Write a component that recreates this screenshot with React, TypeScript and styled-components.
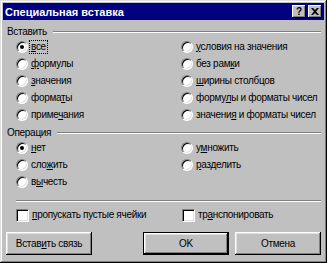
import React from "react";
import styled, { createGlobalStyle } from "styled-components";

const GlobalStyle = createGlobalStyle`
  html, body {
    margin: 0;
    padding: 0;
    background: #c0c0c0;
  }
  body {
    font-family: "Liberation Sans", Arial, sans-serif;
    font-size: 10px;
    letter-spacing: -0.3px;
    color: #000;
  }
  * {
    box-sizing: border-box;
  }
`;

// Window frame
const Window = styled.div`
  width: 327px;
  height: 263px;
  background: #c0c0c0;
  padding: 3px;
  display: flex;
  flex-direction: column;
  box-shadow: inset -1px -1px #000, inset 1px 1px #dfdfdf,
    inset -2px -2px #808080, inset 2px 2px #fff;
`;

// Title bar
const TitleBar = styled.div`
  height: 17px;
  background: #000080;
  color: #fff;
  display: flex;
  align-items: center;
  padding: 0 2px 0 2px;
`;

const TitleText = styled.div`
  flex: 1;
  font-weight: bold;
  font-size: 11px;
  letter-spacing: 0;
`;

const CaptionButton = styled.div<{ $gap?: number }>`
  width: 14px;
  height: 13px;
  margin-left: ${(p) => p.$gap ?? 0}px;
  background: #c0c0c0;
  color: #000;
  display: flex;
  align-items: center;
  justify-content: center;
  font-weight: bold;
  font-size: 10px;
  letter-spacing: 0;
  box-shadow: inset -1px -1px #000, inset 1px 1px #fff,
    inset -2px -2px #808080;
`;

// Content
const Body = styled.div`
  display: flex;
  flex-direction: column;
  padding: 0 3px 0 4px;
`;

const GroupHeader = styled.div<{ $top: number }>`
  height: 12px;
  margin-top: ${(p) => p.$top}px;
  display: flex;
  align-items: center;
  gap: 6px;
  line-height: 12px;
`;

const Etched = styled.div`
  flex: 1;
  height: 2px;
  border-top: 1px solid #808080;
  border-bottom: 1px solid #fff;
`;

const OptionGrid = styled.div<{ $rows: number }>`
  display: grid;
  grid-template-columns: 165px 1fr;
  grid-template-rows: repeat(${(p) => p.$rows}, 17px);
  grid-auto-flow: column;
  padding-left: 9px;
`;

const Option = styled.label`
  display: flex;
  align-items: center;
  gap: 1px;
  white-space: nowrap;
`;

const Radio = styled.span<{ $checked?: boolean }>`
  position: relative;
  width: 12px;
  height: 12px;
  flex: none;
  border-radius: 50%;
  background: #fff;
  border: 1px solid;
  border-color: #808080 #fff #fff #808080;
  box-shadow: inset 1px 1px #000, inset -1px -1px #dfdfdf;
  &::after {
    content: "";
    display: ${(p) => (p.$checked ? "block" : "none")};
    position: absolute;
    left: 3px;
    top: 3px;
    width: 4px;
    height: 4px;
    border-radius: 50%;
    background: #000;
  }
`;

const Check = styled.span`
  width: 13px;
  height: 13px;
  flex: none;
  background: #fff;
  border: 1px solid;
  border-color: #808080 #fff #fff #808080;
  box-shadow: inset 1px 1px #000, inset -1px -1px #dfdfdf;
`;

const Caption = styled.span<{ $focus?: boolean }>`
  padding: 0 1px;
  line-height: 12px;
  border: 1px dotted ${(p) => (p.$focus ? "#000" : "transparent")};
`;

const Key = styled.span`
  text-decoration: underline;
`;

const Separator = styled(Etched)`
  flex: none;
  margin: 10px 0 0 9px;
`;

const CheckRow = styled.div`
  display: grid;
  grid-template-columns: 166px 1fr;
  height: 13px;
  margin-top: 6px;
  padding-left: 9px;
`;

const Footer = styled.div`
  display: flex;
  gap: 6px;
  margin-top: 11px;
  padding: 0 3px 0 3px;
`;

const Button = styled.div<{ $default?: boolean; $push?: boolean }>`
  width: 86px;
  height: 23px;
  margin-left: ${(p) => (p.$push ? "auto" : "0")};
  display: flex;
  align-items: center;
  justify-content: center;
  background: #c0c0c0;
  border: ${(p) => (p.$default ? "1px solid #000" : "none")};
  box-shadow: inset -1px -1px #000, inset 1px 1px #fff,
    inset -2px -2px #808080, inset 2px 2px #dfdfdf;
`;

type Opt = { pre: string; hot: string; post: string; checked?: boolean; focus?: boolean };

const pasteOptions: Opt[] = [
  { pre: "", hot: "в", post: "се", checked: true, focus: true },
  { pre: "", hot: "ф", post: "ормулы" },
  { pre: "", hot: "з", post: "начения" },
  { pre: "форма", hot: "т", post: "ы" },
  { pre: "приме", hot: "ч", post: "ания" },
  { pre: "", hot: "у", post: "словия на значения" },
  { pre: "без рам", hot: "к", post: "и" },
  { pre: "", hot: "ш", post: "ирины столбцов" },
  { pre: "форму", hot: "л", post: "ы и форматы чисел" },
  { pre: "значени", hot: "я", post: " и форматы чисел" },
];

const operationOptions: Opt[] = [
  { pre: "", hot: "н", post: "ет", checked: true },
  { pre: "сло", hot: "ж", post: "ить" },
  { pre: "в", hot: "ы", post: "честь" },
  { pre: "у", hot: "м", post: "ножить" },
  { pre: "", hot: "р", post: "азделить" },
];

const RadioOption = ({ pre, hot, post, checked, focus }: Opt) => (
  <Option>
    <Radio $checked={checked} />
    <Caption $focus={focus}>
      {pre}
      <Key>{hot}</Key>
      {post}
    </Caption>
  </Option>
);

const CloseIcon = () => (
  <svg width="8" height="7" viewBox="0 0 8 7">
    <path d="M0 0h2l2 2 2-2h2L5 3.5 8 7H6L4 5 2 7H0l3-3.5z" fill="#000" />
  </svg>
);

export default function App() {
  return (
    <>
      <GlobalStyle />
      <Window>
        <TitleBar>
          <TitleText>Специальная вставка</TitleText>
          <CaptionButton>?</CaptionButton>
          <CaptionButton $gap={2}>
            <CloseIcon />
          </CaptionButton>
        </TitleBar>
        <Body>
          <GroupHeader $top={6}>
            <span>Вставить</span>
            <Etched />
          </GroupHeader>
          <OptionGrid $rows={5}>
            {pasteOptions.map((o, i) => (
              <RadioOption key={i} {...o} />
            ))}
          </OptionGrid>
          <GroupHeader $top={4}>
            <span>Операция</span>
            <Etched />
          </GroupHeader>
          <OptionGrid $rows={3}>
            {operationOptions.map((o, i) => (
              <RadioOption key={i} {...o} />
            ))}
          </OptionGrid>
          <Separator />
          <CheckRow>
            <Option>
              <Check />
              <Caption>
                <Key>п</Key>ропускать пустые ячейки
              </Caption>
            </Option>
            <Option>
              <Check />
              <Caption>
                тр<Key>а</Key>нспонировать
              </Caption>
            </Option>
          </CheckRow>
        </Body>
        <Footer>
          <Button>
            Встав<Key>и</Key>ть связь
          </Button>
          <Button $default $push>
            OK
          </Button>
          <Button>Отмена</Button>
        </Footer>
      </Window>
    </>
  );
}
